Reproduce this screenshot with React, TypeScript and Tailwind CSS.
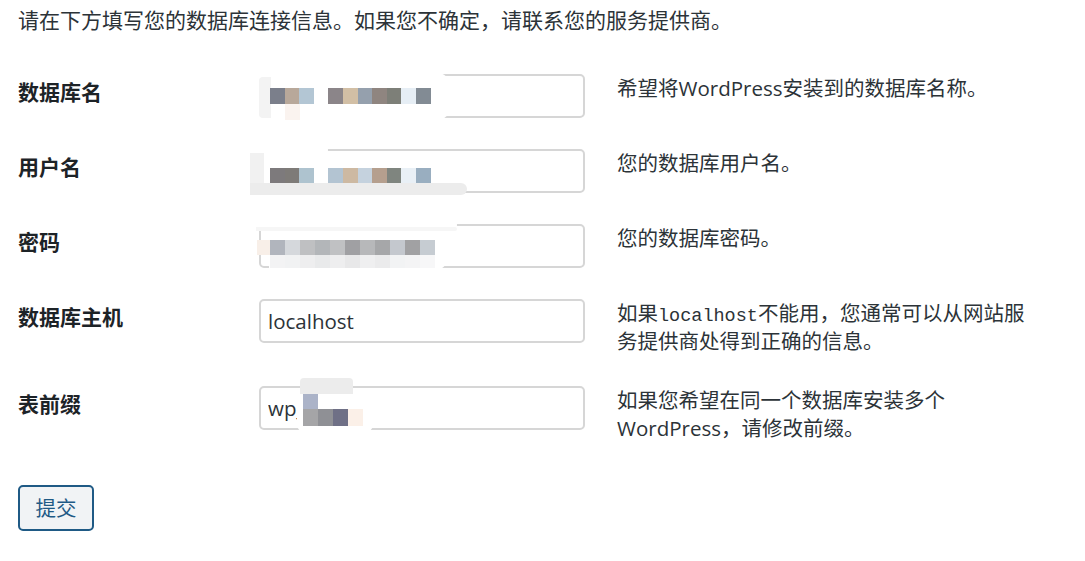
import React from "react";

type Block = { x: number; y: number; w: number; h: number; c: string; cls?: string };

const sq = (x0: number, y: number, w: number, h: number, colors: string[]): Block[] =>
  colors.map((c, i) => ({ x: x0 + i * w, y, w, h, c }));

const row1: Block[] = [
  { x: -2, y: -3, w: 198, h: 51, c: "#ffffff", cls: "rounded-r-[24px]" },
  { x: 0, y: 3, w: 12, h: 41, c: "#f3f3f3", cls: "rounded-l-[4px]" },
  { x: 26, y: 30, w: 15, h: 16, c: "#faf3ef" },
  ...sq(11, 14, 14.6, 16, [
    "#7b7f8b", "#b8a89a", "#b3c6d4", "#ffffff", "#8b8589", "#d2bfa5",
    "#95a0ad", "#8f8580", "#7d7f78", "#e6eef5", "#828b94",
  ]),
];

const row2: Block[] = [
  { x: -3, y: -3, w: 72, h: 8, c: "#ffffff", cls: "rounded-r-[8px]" },
  { x: -9, y: 4, w: 14, h: 40, c: "#f1f1f1" },
  { x: -9, y: 34, w: 217, h: 12, c: "#ececec", cls: "rounded-r-[10px]" },
  ...sq(11, 19, 14.6, 15, [
    "#7d7a7c", "#7e7b78", "#aec3cf", "#ffffff", "#b3c4d2", "#cdb9a2",
    "#c5d2de", "#b59f8e", "#7f857f", "#e9f0f6", "#99aec0",
  ]),
];

const row3: Block[] = [
  { x: -3, y: -3, w: 201, h: 8, c: "#ffffff", cls: "rounded-r-[8px]" },
  { x: -3, y: 3, w: 201, h: 4, c: "#f6f6f6", cls: "rounded-r-[8px]" },
  { x: 10, y: 30, w: 180, h: 18, c: "#ffffff", cls: "rounded-br-[20px]" },
  { x: -2, y: 16, w: 13, h: 15, c: "#f8efe8" },
  ...sq(11, 16, 15, 15, [
    "#b1b5bd", "#d5d8dc", "#bfc0c2", "#b3b6b9", "#c0c1c3", "#a0a0a3",
    "#b7b8ba", "#a6a7a9", "#c4c8ce", "#a1a1a3", "#c6ccd2",
  ]),
  ...sq(11, 31, 15, 13, [
    "#f3f3f4", "#f1f2f3", "#eeeeef", "#e9eaeb", "#eeeeef", "#e8e8e9",
    "#efeff0", "#ebebec", "#f2f3f4", "#f4f4f5", "#f7f7f8",
  ]),
];

const row5: Block[] = [
  { x: 38, y: 23, w: 76, h: 25, c: "#ffffff", cls: "rounded-b-[10px]" },
  { x: 41, y: -8, w: 53, h: 16, c: "#ececec", cls: "rounded-t-[4px]" },
  { x: 44, y: 8, w: 15, h: 15, c: "#abb3c8" },
  { x: 44, y: 23, w: 15, h: 17, c: "#a5a5a7" },
  { x: 59, y: 23, w: 15, h: 17, c: "#8f9095" },
  { x: 74, y: 23, w: 15, h: 17, c: "#6f7086" },
  { x: 89, y: 23, w: 15, h: 17, c: "#fbf0e8" },
];

function Field({
  value,
  blocks,
  type = "text",
}: {
  value: string;
  blocks: Block[];
  type?: string;
}) {
  return (
    <div className="relative w-[326px] h-[44px] shrink-0">
      <input
        type={type}
        readOnly
        value={value}
        className="block w-full h-full border-2 border-[#d6d6d6] rounded-[5px] bg-white pl-[7px] text-[20.5px] text-[#2c3338] outline-none font-['Open_Sans','Noto_Sans_CJK_SC',sans-serif]"
      />
      {blocks.map((b, i) => (
        <div
          key={i}
          className={`absolute ${b.cls ?? ""}`}
          style={{ left: b.x, top: b.y, width: b.w, height: b.h, background: b.c }}
        />
      ))}
    </div>
  );
}

function Row({
  label,
  field,
  desc,
}: {
  label: string;
  field: React.ReactNode;
  desc: React.ReactNode;
}) {
  return (
    <div className="flex items-start">
      <div className="w-[241px] shrink-0 mt-[6px] leading-[24px] text-[21px] font-bold text-[#1d2327]">{label}</div>
      {field}
      <div className="ml-[32px] w-[412px] leading-[28px] text-[#2c3338]">{desc}</div>
    </div>
  );
}

export default function App() {
  return (
    <div className="w-[1085px] h-[561px] bg-white pl-[18px] pt-[6px] text-[20.5px] text-[#2c3338] font-['Open_Sans','Noto_Sans_CJK_SC',sans-serif]">
      <p className="leading-[28px] text-[21px]">
        请在下方填写您的数据库连接信息。如果您不确定，请联系您的服务提供商。
      </p>
      <div className="mt-[40px] flex flex-col gap-[31px]">
        <Row
          label="数据库名"
          field={<Field value="" blocks={row1} />}
          desc="希望将WordPress安装到的数据库名称。"
        />
        <Row
          label="用户名"
          field={<Field value="" blocks={row2} />}
          desc="您的数据库用户名。"
        />
        <Row
          label="密码"
          field={<Field value="" blocks={row3} />}
          desc="您的数据库密码。"
        />
        <Row
          label="数据库主机"
          field={<Field value="localhost" blocks={[]} />}
          desc={
            <>
              如果
              <code className="font-['Liberation_Mono',monospace] text-[18.5px] leading-none">localhost</code>
              不能用，您通常可以从网站服
              <br />
              务提供商处得到正确的信息。
            </>
          }
        />
        <Row
          label="表前缀"
          field={<Field value="wp_" blocks={row5} />}
          desc="如果您希望在同一个数据库安装多个WordPress，请修改前缀。"
        />
      </div>
      <button
        type="button"
        className="mt-[43px] w-[76px] h-[46px] border-2 border-[#1f5a85] rounded-[5px] bg-[#f1f3f5] text-[#1f5a85] text-[20.5px] leading-none"
      >
        提交
      </button>
    </div>
  );
}
